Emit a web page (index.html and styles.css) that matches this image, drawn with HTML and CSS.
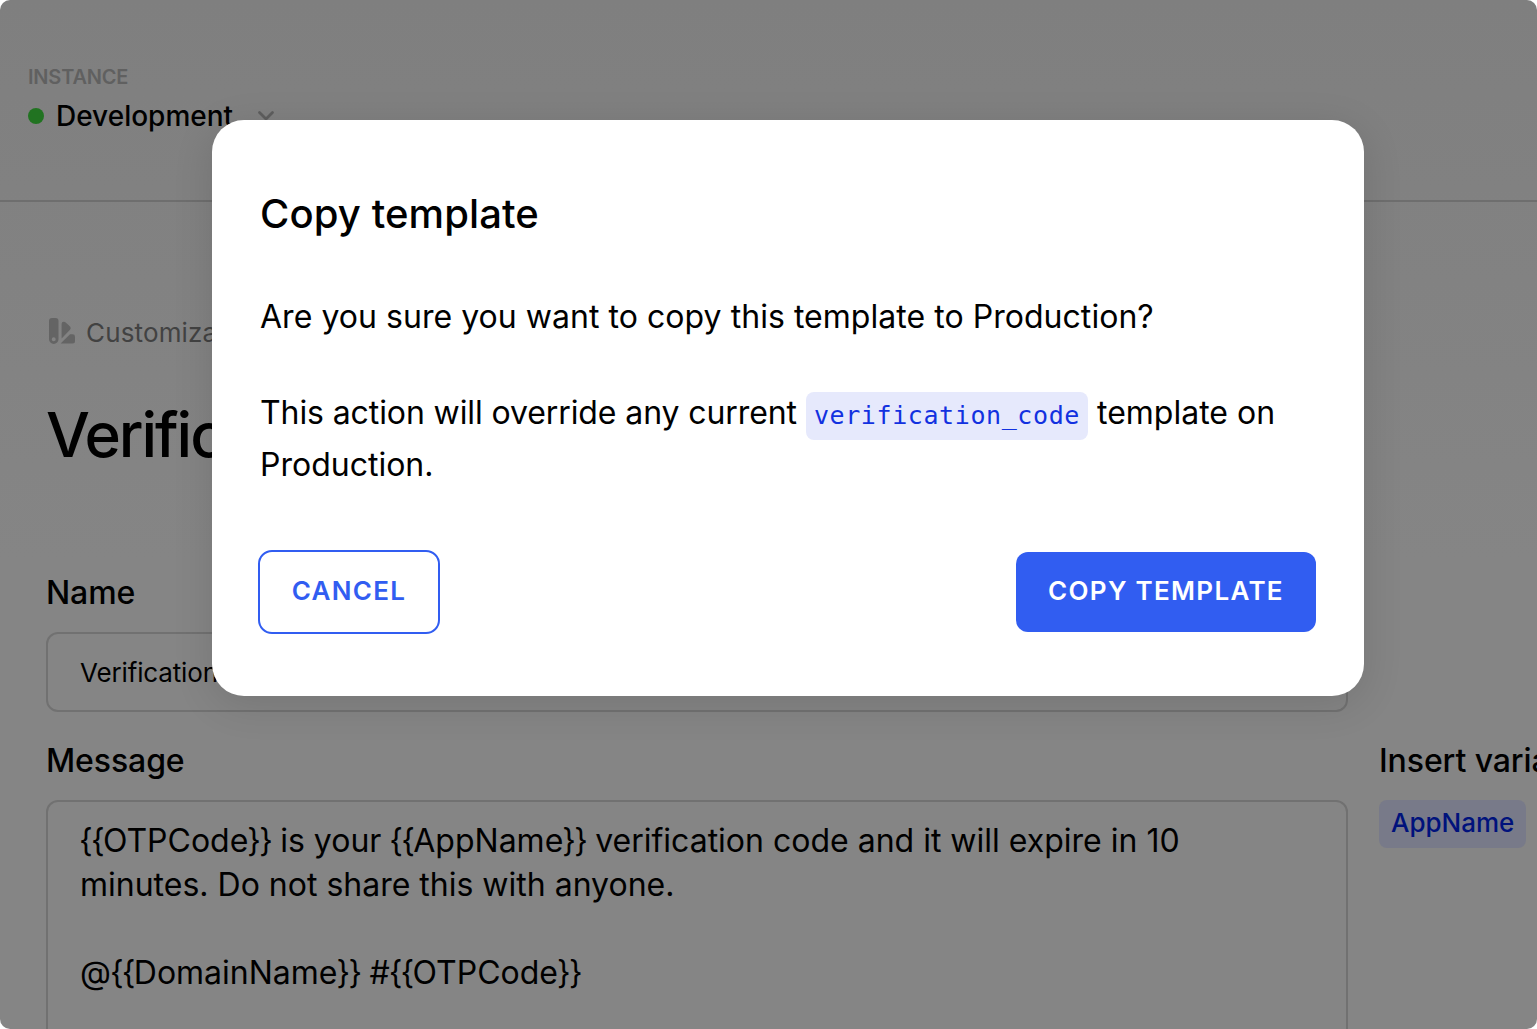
FILE: index.html
```html
<!DOCTYPE html>
<html lang="en">
<head>
<meta charset="utf-8">
<title>Copy template</title>
<link rel="stylesheet" href="styles.css">
</head>
<body>
<div class="window">
  <header class="topbar">
    <div class="eyebrow"><span>INSTANCE</span></div>
    <div class="instance">
      <i class="status"></i>
      <span class="instance-name">Development</span>
      <svg class="chevron" width="18" height="12" viewBox="0 0 18 12"><path d="M2.500 2.500 9 9l6.500-6.500" fill="none" stroke="#5e5e5e" stroke-width="2.800" stroke-linecap="round" stroke-linejoin="round"/></svg>
    </div>
  </header>
  <main class="content">
    <div class="crumb">
      <svg class="swatch" width="28" height="28" viewBox="0 0 28 28" fill="#646464"><path fill-rule="evenodd" d="M4 1H7.500A3 3 0 0 1 10.500 4V22.200A4.700 4.700 0 0 1 1 22.200V4A3 3 0 0 1 4 1ZM5.700 20.200A2 2 0 1 0 5.700 24.200A2 2 0 1 0 5.700 20.200Z"/><path d="M13.600 7Q13.600 4.500 16 4.800Q17.500 5.200 18.500 6.200L21.500 9Q23.700 11 21.800 13L13.600 21.500Z"/><path d="M12.600 26.500 22 17.200H24.500Q27 17.200 27 19.500V24Q27 26.500 24.500 26.500Z"/></svg>
      <span class="crumb-text">Customization</span>
    </div>
    <h1 class="title"><span>Verification code</span></h1>
    <div class="form">
      <div class="fields">
        <label class="label"><span>Name</span></label>
        <div class="input"><span>Verification code</span></div>
        <label class="label message-label"><span>Message</span></label>
        <div class="textarea"><b>{{</b>OTPCode<b>}}</b> is your <b>{{</b>AppName<b>}}</b> verification code and it will expire in 10<br>minutes. Do not share this with anyone.<br><br>@<b>{{</b>DomainName<b>}}</b> #<b>{{</b>OTPCode<b>}}</b></div>
      </div>
      <aside class="variables">
        <div class="label"><span>Insert variable</span></div>
        <span class="chip"><span>AppName</span></span>
      </aside>
    </div>
  </main>
  <section class="dialog" role="dialog">
    <h2 class="dialog-title"><span>Copy template</span></h2>
    <p class="question"><span>Are you sure you want to copy this template to Production?</span></p>
    <p class="warning"><span class="lead">This action will override any current</span> <code>verification_code</code> <span>template on</span><br><span>Production.</span></p>
    <div class="actions">
      <button class="button cancel"><span>CANCEL</span></button>
      <button class="button confirm"><span>COPY TEMPLATE</span></button>
    </div>
  </section>
</div>
</body>
</html>
```
FILE: styles.css
```css
* { box-sizing: border-box; margin: 0; padding: 0; }
body { background: #fff; font-family: Inter, "Liberation Sans", sans-serif; color: #000; overflow: hidden; }
.window { position: relative; height: 1029px; overflow: hidden; border-radius: 10px; background: linear-gradient(#7f7f7f 0, #858585 560px, #858585 100%); }
.topbar { height: 202px; padding: 65px 28px 0; border-bottom: 2px solid #6e6e6e; }
.eyebrow { font-size: 20px; line-height: 24px; font-weight: 600; letter-spacing: -.2px; color: #606060; }
.instance { display: flex; align-items: center; height: 40px; margin-top: 7px; }
.status { width: 16px; height: 16px; border-radius: 50%; background: #217321; }
.instance-name { width: 177px; margin-left: 12px; font-size: 28px; line-height: 40px; font-weight: 500; white-space: nowrap; }
.chevron { margin-left: 24px; }
.content { padding: 115px 0 0 46px; }
.crumb { display: flex; align-items: center; gap: 11px; height: 32px; }
.swatch { margin: -5px 0 0 2px; }
.crumb-text { margin-left: -1px; font-size: 26px; line-height: 32px; letter-spacing: .15px; color: #424242; }
.title { margin-top: 46px; font-size: 62px; line-height: 80px; font-weight: 500; letter-spacing: -2.1px; }
.form { display: grid; grid-template-columns: 1302px 300px; column-gap: 31px; margin-top: 98px; }
.label { display: block; font-size: 32px; line-height: 40px; font-weight: 500; letter-spacing: -.1px; white-space: nowrap; }
.input { display: flex; align-items: center; height: 80px; margin-top: 19px; padding: 0 32px; border: 2px solid #717171; border-radius: 12px; font-size: 26px; letter-spacing: -.15px; }
.message-label { margin-top: 29px; }
.textarea { height: 300px; margin-top: 19px; padding: 17px 32px; border: 2px solid #717171; border-radius: 12px; font-size: 32px; line-height: 44px; white-space: nowrap; }
.textarea b { margin-left: -1px; font-weight: 400; letter-spacing: -1.7px; }
.variables { padding-top: 168px; }
.chip { display: inline-block; height: 48px; margin-top: 19px; padding: 0 12px; border-radius: 8px; background: #787a89; color: #00127c; font-size: 26px; line-height: 46px; font-weight: 500; }
.dialog { position: absolute; left: 212px; top: 120px; width: 1152px; height: 576px; padding: 70px 48px 0; border-radius: 32px; background: #fff; box-shadow: 0 8px 40px rgba(0, 0, 0, .12); white-space: nowrap; }
.dialog-title { font-size: 40px; line-height: 48px; font-weight: 500; letter-spacing: .1px; }
.question, .warning { font-size: 32px; line-height: 52px; }
.question { margin-top: 53px; letter-spacing: .04px; }
.warning { height: 104px; margin-top: 44px; }
.lead { letter-spacing: -.1px; }
code { display: inline-block; height: 48px; padding: 0 8px; border-radius: 8px; background: #e6e9fc; color: #1231e0; font: 25px/48px "DejaVu Sans Mono", monospace; letter-spacing: .6px; vertical-align: 0; margin: -10px 0; }
.actions { display: flex; align-items: center; justify-content: space-between; height: 84px; margin: 59px 0 0 -2px; }
.button { border: 0; font: 600 26px/78px Inter, sans-serif; letter-spacing: 1.3px; }
.button span { display: block; margin-top: -2px; }
.cancel { width: 182px; height: 84px; border: 2px solid #315df1; border-radius: 14px; background: #fff; color: #315df1; }
.confirm { width: 300px; height: 80px; border-radius: 12px; background: #315df1; color: #fff; }
```
